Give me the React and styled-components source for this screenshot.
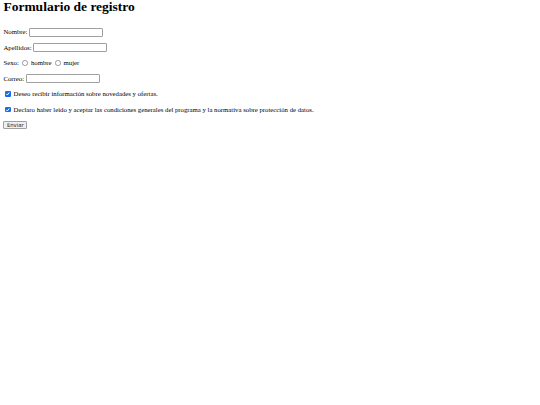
import styled, { createGlobalStyle } from "styled-components";

const GlobalStyle = createGlobalStyle`
  html, body { margin: 0; padding: 0; background: #fff; }
  body { font-family: "Liberation Serif", "Times New Roman", serif; color: #000; }
`;

const CheckBox = ({ id }) => (
  <CheckMark htmlFor={id}>
    <svg viewBox="0 0 10 10" width="100%" height="100%">
      <path d="M2.2 5.2 L4.2 7.2 L7.8 2.8" fill="none" stroke="#fff" strokeWidth="1.8" />
    </svg>
  </CheckMark>
);

export default function App() {
  return (
    <>
      <GlobalStyle />
      <Page>
        <Title>Formulario de registro</Title>
        <Form onSubmit={(e) => e.preventDefault()}>
          <Row>
            <Label htmlFor="nombre">Nombre:</Label>
            <TextInput id="nombre" type="text" />
          </Row>
          <Row>
            <Label htmlFor="apellidos">Apellidos:</Label>
            <TextInput id="apellidos" type="text" />
          </Row>
          <Row>
            <Label>Sexo:</Label>
            <Radio htmlFor="hombre" />
            <Label htmlFor="hombre">hombre</Label>
            <Radio htmlFor="mujer" />
            <Label htmlFor="mujer">mujer</Label>
          </Row>
          <Row>
            <Label htmlFor="correo">Correo:</Label>
            <TextInput id="correo" type="email" />
          </Row>
          <Row>
            <CheckBox id="novedades" />
            <Label htmlFor="novedades">Deseo recibir información sobre novedades y ofertas.</Label>
          </Row>
          <Row>
            <CheckBox id="condiciones" />
            <Label htmlFor="condiciones">
              Declaro haber leído y aceptar las condiciones generales del programa y la normativa sobre protección de datos.
            </Label>
          </Row>
          <Row>
            <Button type="submit">Enviar</Button>
          </Row>
        </Form>
      </Page>
    </>
  );
}

const Page = styled.div`
  padding: 0 3.4px;
`;
const Title = styled.h1`
  margin: 0 0 10.25px;
  font-size: 13.5px;
  line-height: 14px;
  font-weight: bold;
`;
const Form = styled.form`
  display: flex;
  flex-direction: column;
`;
const Row = styled.div`
  display: flex;
  align-items: center;
  height: 15.5px;
  font-size: 6.75px;
  white-space: nowrap;
`;
const Label = styled.label`
  line-height: 8px;
`;
const TextInput = styled.input`
  box-sizing: border-box;
  width: 74px;
  height: 9px;
  margin: 0 0 0 1.7px;
  padding: 0;
  border: 0.5px solid #a0a0a0;
  border-radius: 1px;
  background: #fff;
  font-size: 5.6px;
`;
const Radio = styled.label`
  box-sizing: border-box;
  display: inline-block;
  width: 5.5px;
  height: 5.5px;
  margin: 0 3px 0 3.6px;
  border: 0.6px solid #9a9a9a;
  border-radius: 50%;
  background: #fff;
`;
const CheckMark = styled.label`
  box-sizing: border-box;
  display: inline-flex;
  width: 5.5px;
  height: 5.5px;
  margin: 0 3px 0 1.7px;
  border-radius: 1px;
  background: #1a6fe0;
`;
const Button = styled.button`
  box-sizing: border-box;
  height: 8px;
  padding: 0 2.5px;
  border: 0.5px solid #a0a0a0;
  border-radius: 1px;
  background: #efefef;
  font-family: "DejaVu Sans", sans-serif;
  font-size: 5.3px;
  line-height: 6px;
  color: #222;
`;
